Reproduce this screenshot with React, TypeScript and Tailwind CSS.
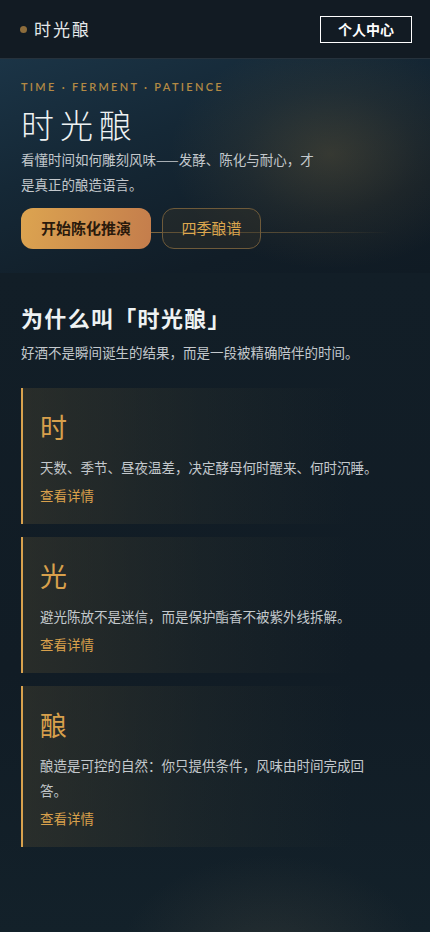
const cards = [
  { char: '时', text: '天数、季节、昼夜温差，决定酵母何时醒来、何时沉睡。' },
  { char: '光', text: '避光陈放不是迷信，而是保护酯香不被紫外线拆解。' },
  { char: '酿', text: '酿造是可控的自然：你只提供条件，风味由时间完成回答。' },
];

export default function App() {
  return (
    <div
      className="min-h-[932px] bg-[#111c25] text-[#e6eaec]"
      style={{ fontFamily: '"Noto Sans CJK SC", "Noto Sans", sans-serif' }}
    >
      {/* Header */}
      <header className="h-[59px] flex items-center justify-between px-5 bg-[#121b23] border-b border-[#26323c]">
        <div className="flex items-center gap-[7px]">
          <span className="w-[7px] h-[7px] rounded-full bg-[#8d6d3c]" />
          <span className="text-[17px] tracking-[2px] text-[#e4e8ea]">时光酿</span>
        </div>
        <button className="mr-[-2px] w-[92px] h-[27px] border border-white text-[14px] font-bold text-white leading-none">
          个人中心
        </button>
      </header>

      {/* Hero */}
      <section className="relative overflow-hidden h-[214px] px-[21px] pt-[22px] bg-[linear-gradient(160deg,#1b3446_0%,#152836_35%,#111d27_75%,#101b24_100%)]">
        <div className="pointer-events-none absolute left-[170px] top-[-20px] w-[320px] h-[230px] rounded-full bg-[radial-gradient(closest-side,rgba(120,100,60,0.35),rgba(120,100,60,0.12)_55%,transparent)]" />
        <div className="pointer-events-none absolute left-[150px] right-[40px] top-[173px] h-px bg-[linear-gradient(90deg,rgba(170,130,70,0.7),rgba(170,130,70,0.35)_60%,transparent)]" />
        <div className="relative">
          <p className="text-[11px] font-semibold tracking-[0.21em] text-[#b38a44] leading-none" style={{ fontFamily: 'Lato, "Noto Sans", sans-serif' }}>
            TIME · FERMENT · PATIENCE
          </p>
          <h1 className="mt-[12px] text-[33px] leading-[40px] tracking-[0.18em] font-light text-[#eef2f3]">时光酿</h1>
          <p className="mt-[3px] max-w-[305px] text-[13.5px] leading-[25px] text-[#c3c8cc]">
            看懂时间如何雕刻风味——发酵、陈化与耐心，才是真正的酿造语言。
          </p>
          <div className="mt-[11px] flex gap-[11px]">
            <button className="w-[130px] h-[41px] rounded-[12px] bg-[linear-gradient(100deg,#dca450,#c47d4c)] text-[15px] font-bold text-[#2a1a0c]">
              开始陈化推演
            </button>
            <button className="w-[99px] h-[41px] rounded-[12px] border border-[#6e5a3a] bg-[rgba(60,55,40,0.35)] text-[15px] text-[#dca64e]">
              四季酿谱
            </button>
          </div>
        </div>
      </section>

      {/* Why section */}
      <section className="relative overflow-hidden px-[21px] pt-[28px] pb-[88px] bg-[linear-gradient(180deg,#121e27,#111c25_60%,#13212a)]">
        <div className="pointer-events-none absolute left-[120px] bottom-[-120px] w-[300px] h-[200px] rounded-full bg-[radial-gradient(closest-side,rgba(90,85,70,0.25),transparent)]" />
        <div className="relative">
          <h2 className="text-[22px] font-bold tracking-[0.06em] text-[#eef2f3] leading-[32px]">为什么叫「时光酿」</h2>
          <p className="mt-[8px] text-[13.5px] text-[#c3c8cc] leading-[22px]">好酒不是瞬间诞生的结果，而是一段被精确陪伴的时间。</p>
          <div className="mt-[25px] flex flex-col gap-[13px]">
            {cards.map((c) => (
              <div
                key={c.char}
                className="border-l-2 border-[#d9a24e] pl-[17px] pr-[30px] pt-[20px] pb-[18px] bg-[linear-gradient(90deg,rgba(60,58,45,0.55),rgba(45,50,45,0.3)_45%,rgba(20,30,38,0)_85%)]"
              >
                <div className="text-[27px] leading-[38px] text-[#d8a04c]">{c.char}</div>
                <p className="mt-[9px] text-[13.5px] leading-[25px] text-[#c3c8cc]">{c.text}</p>
                <a href="#" className="block mt-[4px] text-[13.5px] leading-[22px] text-[#d8a04c]">查看详情</a>
              </div>
            ))}
          </div>
        </div>
      </section>
    </div>
  );
}
